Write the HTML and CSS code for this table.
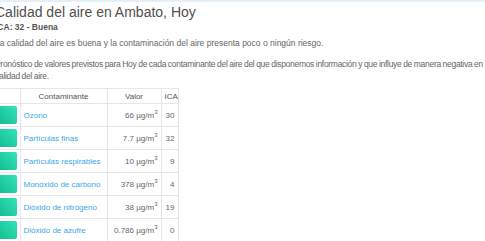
FILE: index.html
```html
<!DOCTYPE html>
<html lang="es">
<head>
  <meta charset="UTF-8">
  <title>Calidad del aire en Ambato</title>
  <link rel="stylesheet" href="styles.css">
</head>
<body>

<div class="panel">
  <h2>Calidad del aire en Ambato, Hoy</h2>
  <div class="ica-label">ICA: 32 - Buena</div>
  <p>La calidad del aire es buena y la contaminación del aire presenta poco o ningún riesgo.</p>
  <p class="forecast">Pronóstico de valores previstos para Hoy de cada contaminante del aire del que disponemos información y que influye de manera negativa en calidad del aire.</p>

  <table class="pollutants">
    <colgroup>
      <col class="swatch-col">
      <col class="name-col">
      <col class="value-col">
      <col class="ica-col">
    </colgroup>
    <thead>
      <tr>
        <th class="blank"></th>
        <th>Contaminante</th>
        <th>Valor</th>
        <th>ICA</th>
      </tr>
    </thead>
    <tbody>
      <tr>
        <td class="blank"><span class="swatch"></span></td>
        <td><a href="#">Ozono</a></td>
        <td class="num">66 µg/m<sup>3</sup></td>
        <td class="num">30</td>
      </tr>
      <tr>
        <td class="blank"><span class="swatch"></span></td>
        <td><a href="#">Partículas finas</a></td>
        <td class="num">7.7 µg/m<sup>3</sup></td>
        <td class="num">32</td>
      </tr>
      <tr>
        <td class="blank"><span class="swatch"></span></td>
        <td><a href="#">Partículas respirables</a></td>
        <td class="num">10 µg/m<sup>3</sup></td>
        <td class="num">9</td>
      </tr>
      <tr>
        <td class="blank"><span class="swatch"></span></td>
        <td><a href="#">Monóxido de carbono</a></td>
        <td class="num">378 µg/m<sup>3</sup></td>
        <td class="num">4</td>
      </tr>
      <tr>
        <td class="blank"><span class="swatch"></span></td>
        <td><a href="#">Dióxido de nitrógeno</a></td>
        <td class="num">38 µg/m<sup>3</sup></td>
        <td class="num">19</td>
      </tr>
      <tr>
        <td class="blank"><span class="swatch"></span></td>
        <td><a href="#">Dióxido de azufre</a></td>
        <td class="num">0.786 µg/m<sup>3</sup></td>
        <td class="num">0</td>
      </tr>
    </tbody>
  </table>
</div>

</body>
</html>
```

FILE: styles.css
```css
body {
  margin: 0;
  background: #fff;
  color: #666;
  font-family: 'Liberation Sans', Arial, sans-serif;
  overflow: hidden;
}

.panel {
  border-top: 2px solid #e4eff6;
  margin-left: -5px;
  width: 492px;
  padding-top: 1px;
}

h2 {
  margin: 0;
  font-size: 14px;
  font-weight: normal;
  color: #4f4f4f;
  line-height: 18px;
}

.ica-label {
  font-size: 8.5px;
  font-weight: bold;
  color: #555;
  line-height: 12px;
}

p {
  font-size: 8.5px;
  color: #666;
  margin: 4px 0 0;
  line-height: 12px;
}

/* long paragraph is set a touch tighter so "en" stays on the first line */
p.forecast {
  margin-top: 9px;
  letter-spacing: -0.3px;
  word-spacing: -0.3px;
}

.pollutants {
  table-layout: fixed;
  width: 183px;
  border-collapse: collapse;
  margin-top: 6px;
  font-size: 8px;
  white-space: nowrap;
}

.swatch-col { width: 25px; }
.name-col { width: 87px; }
.value-col { width: 54px; }
.ica-col { width: 17px; }

.pollutants th,
.pollutants td {
  border: 1px solid #e6e6e6;
  padding: 0 3px;
  overflow: hidden;
}

.pollutants th {
  height: 14px;
  font-weight: normal;
  color: #555;
  text-align: center;
}

.pollutants td {
  height: 22px;
}

.pollutants .blank {
  border-left: none;
  padding: 0 3px 0 0;
}

.swatch {
  display: block;
  height: 18px;
  border-radius: 2px;
  background: linear-gradient(45deg, #0fb98b, #34e3b9);
}

.pollutants a {
  color: #3aa7e6;
  text-decoration: none;
}

.pollutants .num {
  text-align: right;
  color: #666;
}

.pollutants sup {
  font-size: 6px;
  line-height: 0;
}
```
